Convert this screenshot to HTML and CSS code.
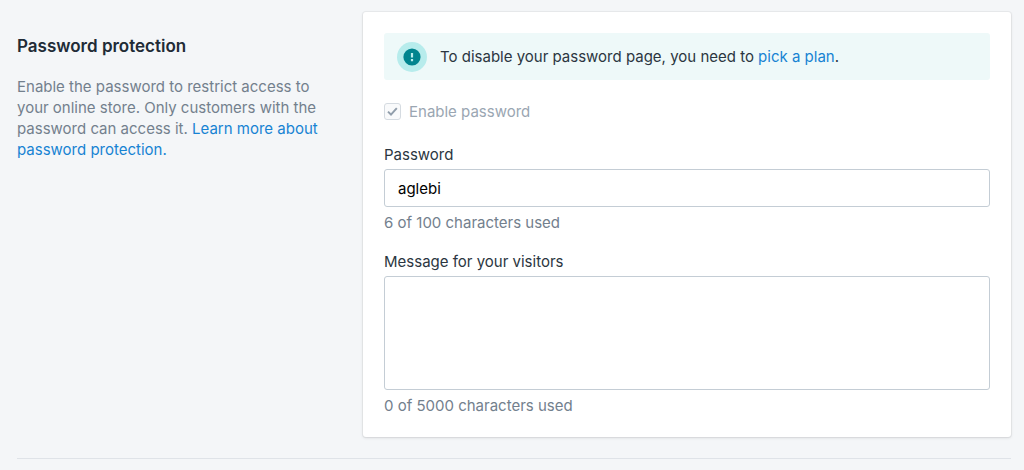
FILE: index.html
```html
<!DOCTYPE html>
<html lang="en">
<head>
    <meta charset="UTF-8">
    <meta name="viewport" content="width=device-width, initial-scale=1.0">
    <title>Password protection</title>

    <link rel="stylesheet" href="styles.css">
</head>
<body>
    <section class="section">
        <div class="description">
            <h2>Password protection</h2>
            <p>Enable the password to restrict access to your online store. Only customers with the password can access it. <a href="#">Learn more about password protection.</a></p>
        </div>

        <form class="card">
            <div class="banner">
                <svg class="banner-icon" viewBox="0 0 30 30" aria-hidden="true">
                    <circle cx="15" cy="15" r="15" fill="#b7ecec"/>
                    <circle cx="15" cy="15" r="8.6" fill="#00848e"/>
                    <path d="M13.9 10.9h2.2v4.6h-2.2zM13.9 17h2.2v2.2h-2.2z" fill="#b7ecec"/>
                </svg>
                <p>To disable your password page, you need to <a href="#">pick a plan</a>.</p>
            </div>

            <label class="check">
                <input type="checkbox" checked disabled>
                <span>Enable password</span>
            </label>

            <div class="field">
                <label for="password">Password</label>
                <input type="text" id="password" value="aglebi">
                <p class="help">6 of 100 characters used</p>
            </div>

            <div class="field">
                <label for="message">Message for your visitors</label>
                <textarea id="message"></textarea>
                <p class="help">0 of 5000 characters used</p>
            </div>
        </form>
    </section>
</body>
</html>
```
FILE: styles.css
```css
* {
    box-sizing: border-box;
}

body {
    margin: 0;
    background-color: #f4f6f8;
    font-family: Inter, "Liberation Sans", sans-serif;
    font-size: 15px;
    line-height: 21px;
    color: #2b3641;
}

h2, p {
    margin: 0;
}

a {
    color: #1783d3;
    text-decoration: none;
}

.section {
    display: grid;
    grid-template-columns: 1fr 2fr;
    gap: 22px;
    margin: 0 13px 0 17px;
    padding: 12px 0 21px;
    border-bottom: 1px solid #dfe3e8;
}

.description {
    padding: 24px 16px 0 0;
    color: #73808d;
}

.description h2 {
    margin-bottom: 19px;
    font-size: 17px;
    font-weight: 600;
    color: #212b36;
}

.card {
    padding: 21px;
    background-color: #fff;
    border-radius: 3px;
    box-shadow: 0 0 0 1px rgba(63, 63, 68, 0.05), 0 1px 3px rgba(63, 63, 68, 0.15);
}

.banner {
    display: flex;
    align-items: center;
    gap: 13px;
    min-height: 47px;
    padding: 8px 13px;
    background-color: #eef9f9;
    border-radius: 3px;
}

.banner-icon {
    width: 30px;
    height: 30px;
}

.check {
    display: flex;
    align-items: center;
    gap: 8px;
    margin: 21px 0 22px;
    color: #9aa6b2;
}

.check input {
    appearance: none;
    width: 17px;
    height: 17px;
    margin: 0;
    border: 1px solid #d5dbe1;
    border-radius: 3px;
    background: #f9fafb url("data:image/svg+xml,%3Csvg xmlns='http://www.w3.org/2000/svg' viewBox='0 0 15 15'%3E%3Cpath d='M3 7.6l3 3 5.8-6.4' fill='none' stroke='%23919eab' stroke-width='2'/%3E%3C/svg%3E") center no-repeat;
}

.field + .field {
    margin-top: 18px;
}

.field label {
    display: block;
    margin-bottom: 4px;
}

.field input, .field textarea {
    display: block;
    width: 100%;
    padding: 8px 13px;
    border: 1px solid #c4cdd5;
    border-radius: 3px;
    background-color: #fff;
    font: inherit;
    color: #000;
    resize: none;
}

.field input {
    height: 38px;
}

.field textarea {
    height: 114px;
}

.help {
    margin-top: 5px;
    color: #73808d;
}
```
